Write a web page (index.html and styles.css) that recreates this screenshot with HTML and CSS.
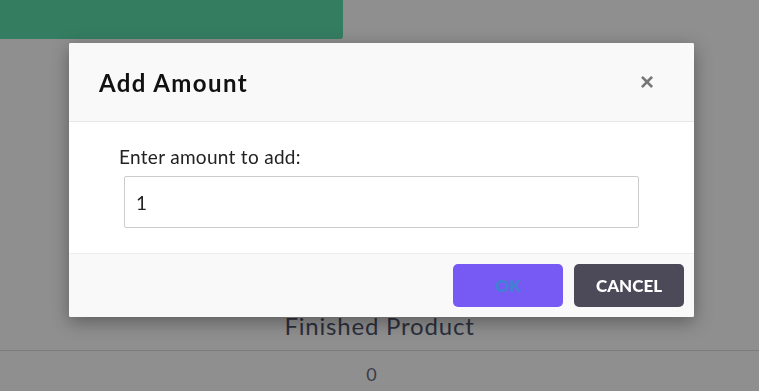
FILE: index.html
```html
<!DOCTYPE html>
<html lang="en">
<head>
    <meta charset="UTF-8">
    <meta name="viewport" content="width=device-width, initial-scale=1.0">
    <title>Inventory</title>
    <link rel="stylesheet" href="styles.css">
</head>
<body>
    <div class="topbar"></div>

    <div class="product">
        <h2>Finished Product</h2>
        <div class="row">0</div>
    </div>

    <!-- Modal -->
    <div class="modal">
        <div class="modal-content">
            <div class="modal-header">
                <h3>Add Amount</h3>
                <button class="close">&times;</button>
            </div>
            <div class="modal-body">
                <label for="amount">Enter amount to add:</label>
                <input type="text" id="amount" value="1">
            </div>
            <div class="modal-footer">
                <button class="btn btn-ok">OK</button>
                <button class="btn btn-cancel">CANCEL</button>
            </div>
        </div>
    </div>
</body>
</html>
```
FILE: styles.css
```css
body {
    margin: 0;
    padding: 0;
    background-color: #8f8f8f;
    font-family: Lato, "Open Sans", sans-serif;
    overflow: hidden;
}

.topbar {
    width: 343px;
    height: 39px;
    background-color: #347d61;
    border-bottom-right-radius: 3px;
}

.product {
    padding-top: 272px;
    text-align: center;
    color: #2c2f3c;
}
.product h2 {
    margin: 0;
    height: 39px;
    font-size: 24px;
    font-weight: normal;
    letter-spacing: 0.8px;
    line-height: 30px;
}
.row {
    border-top: 1px solid #7b7b7b;
    padding: 12px 16px 0 0;
    font-size: 18px;
    color: #3a3c48;
}

/* Estilos para el modal */
.modal {
    position: fixed;
    top: 43px;
    left: 69px;
    width: 625px;
}

.modal-content {
    background-color: #fff;
    border-radius: 2px;
    box-shadow: 0 5px 18px rgba(0, 0, 0, 0.35);
    overflow: hidden;
}

.modal-header {
    display: flex;
    align-items: center;
    justify-content: space-between;
    height: 78px;
    padding: 0 40px 0 30px;
    background-color: #f9f9f9;
    border-bottom: 1px solid #e8e8e8;
}
.modal-header h3 {
    margin: 0;
    font-size: 24px;
    font-weight: bold;
    color: #111;
    letter-spacing: 1.4px;
}
.close {
    border: none;
    background: none;
    padding: 0;
    font-size: 24px;
    font-weight: bold;
    color: #777;
    cursor: pointer;
    line-height: 1;
}

.modal-body {
    padding: 23px 55px 25px 50px;
}
.modal-body label {
    display: block;
    font-size: 19px;
    letter-spacing: 0.3px;
    color: #222;
    margin-bottom: 8px;
}
.modal-body input {
    display: block;
    box-sizing: border-box;
    width: 515px;
    height: 52px;
    margin-left: 5px;
    padding: 0 11px;
    font-family: Lato, sans-serif;
    font-size: 19px;
    color: #222;
    border: 1px solid #ccc;
    border-radius: 2px;
    outline: none;
}

.modal-footer {
    display: flex;
    justify-content: flex-end;
    gap: 11px;
    padding: 10px;
    background-color: #f9f9f9;
    border-top: 1px solid #eee;
}
.btn {
    width: 110px;
    height: 43px;
    border: none;
    border-radius: 5px;
    font-family: Lato, sans-serif;
    font-size: 17px;
    font-weight: 900;
    cursor: pointer;
}
.btn-ok {
    background-color: #775af3;
    color: #3d85d0;
}
.btn-cancel {
    background-color: #4c4a59;
    color: #fff;
}
```
